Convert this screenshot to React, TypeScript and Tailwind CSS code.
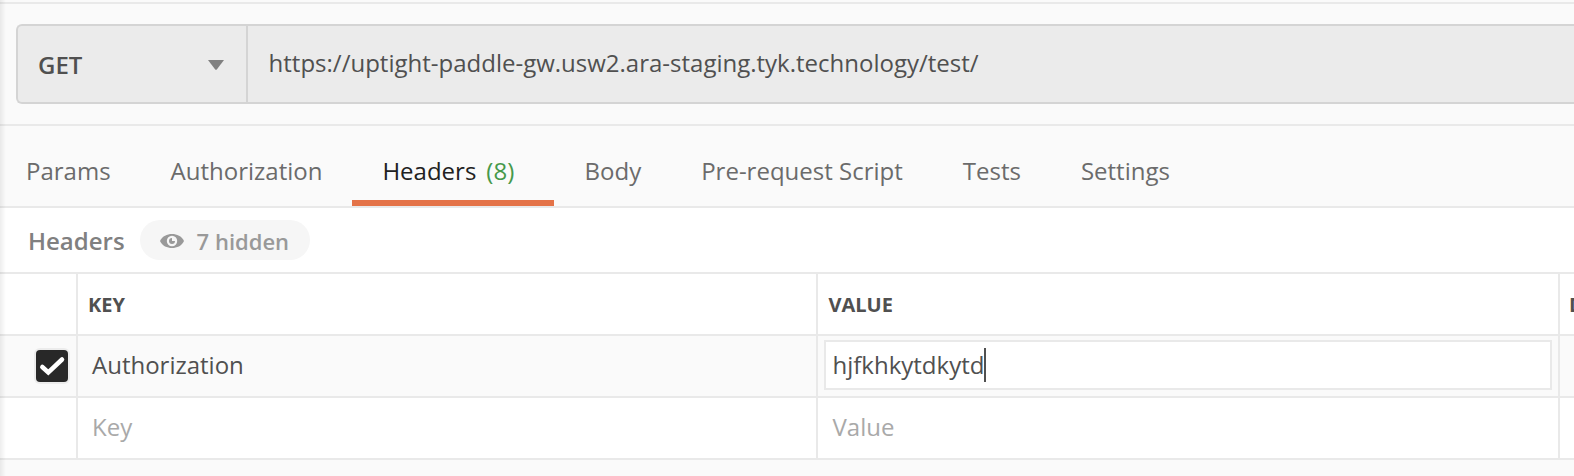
import type { ReactNode } from "react";

const tabs = [
  { name: "Params" },
  { name: "Authorization" },
  { name: "Headers", count: 8, active: true },
  { name: "Body" },
  { name: "Pre-request Script" },
  { name: "Tests" },
  { name: "Settings" },
];

function Row({ children, className = "" }: { children: ReactNode; className?: string }) {
  return (
    <div className={`grid h-[62px] grid-cols-[78px_740px_742px_1fr] border-b-2 border-[#e9e9e9] ${className}`}>
      {children}
    </div>
  );
}

function Cell({ children, className = "" }: { children?: ReactNode; className?: string }) {
  return <div className={`flex items-center border-r-2 border-[#e9e9e9] ${className}`}>{children}</div>;
}

function EyeIcon() {
  return (
    <svg width="24" height="14" viewBox="0 0 24 14" className="mt-0.5 shrink-0">
      <path d="M0 7C2.500 2 7 0 12 0s9.500 2 12 7c-2.500 5-7 7-12 7S2.500 12 0 7z" fill="#999" />
      <circle cx="12" cy="7" r="5.200" fill="#f6f6f6" />
      <path d="M12 4a3 3 0 1 0 3 3h-3z" fill="#999" />
    </svg>
  );
}

export default function App() {
  return (
    <div className="relative h-[476px] w-full overflow-hidden bg-[#fafafa] font-['Open_Sans',sans-serif] text-[24px] leading-8 whitespace-nowrap text-[#505050]">
      <div className="h-1 border-b-2 border-[#e9e9e9]" />
      <div className="h-[122px] border-b-2 border-[#e9e9e9] pt-5 pl-4">
        <div className="flex h-20 rounded-l-md border-2 border-r-0 border-[#d4d4d4] bg-[#ebebeb]">
          <div className="flex w-[230px] items-center justify-between border-r-2 border-[#d4d4d4] pr-[22px] pl-5">
            <span className="pt-0.5 font-semibold">GET</span>
            <svg width="16" height="10" viewBox="0 0 16 10" className="mt-0.5">
              <path d="M0 0h16L8.800 9.400q-.8.900-1.600 0z" fill="#808080" />
            </svg>
          </div>
          <div className="flex items-center pb-0.5 pl-[20.6px]">https://uptight-paddle-gw.usw2.ara-staging.tyk.technology/test/</div>
        </div>
      </div>
      <div className="flex h-[82px] border-b-2 border-[#e9e9e9] text-[#6b6b6b]">
        {tabs.map((t, i) => (
          <div
            key={t.name}
            className={`flex h-20 shrink-0 gap-[10px] border-b-6 pt-[29px] ${i === 0 ? "pl-[26px]" : "pl-[30px]"} ${
              t.active ? "mr-[0.3px] border-[#e47348] pr-10 text-[#212121]" : "border-transparent pr-[30px]"
            }`}
          >
            <span>{t.name}</span>
            {t.count && <span className="text-[#46994a]">({t.count})</span>}
          </div>
        ))}
      </div>
      <div className="flex h-16 items-center bg-white pl-7 font-semibold text-[#808080]">
        <span className="pt-0.5">Headers</span>
        <div className="ml-[15px] flex h-10 w-[170px] items-center rounded-full bg-[#f6f6f6] pl-5 text-[22px] text-[#999]">
          <EyeIcon />
          <span className="ml-[13px] pt-0.5">7 hidden</span>
        </div>
      </div>
      <div className="border-t-2 border-[#e9e9e9] bg-white">
        <Row className="text-[20px] font-bold">
          <Cell />
          <Cell className="pt-0.5 pl-[10px]">KEY</Cell>
          <Cell className="pt-0.5 pl-[10.5px]">VALUE</Cell>
          <div className="flex items-center overflow-hidden pt-0.5 pl-[9px]">DESCRIPTION</div>
        </Row>
        <Row className="bg-[#fafafa]">
          <Cell className="pl-9">
            <div className="flex size-8 items-center justify-center rounded-[4px] bg-[#282828] ring-2 ring-[#ececec]">
              <svg width="32" height="32" viewBox="0 0 32 32" fill="none">
                <path d="M6.300 17L12.300 22.500L26 9.500" stroke="#fff" strokeWidth="4.500" strokeLinecap="round" />
              </svg>
            </div>
          </Cell>
          <Cell className="pb-0.5 pl-[14px]">Authorization</Cell>
          <Cell className="pl-1.5">
            <div className="mb-0.5 flex h-[50px] w-[728px] items-center border-2 border-[#e9e9e9] bg-white pl-[6.5px]">
              <span>hjfkhkytdkytd</span>
              <span className="h-[34px] w-0.5 bg-[#505050]" />
            </div>
          </Cell>
          <div />
        </Row>
        <Row className="text-[#a9a9a9]">
          <Cell />
          <Cell className="pb-0.5 pl-[14px]">Key</Cell>
          <Cell className="pb-0.5 pl-[14.5px]">Value</Cell>
          <div />
        </Row>
      </div>
      <div className="absolute inset-y-0 left-0 w-1.5 bg-linear-to-r from-black/7 to-transparent" />
    </div>
  );
}
